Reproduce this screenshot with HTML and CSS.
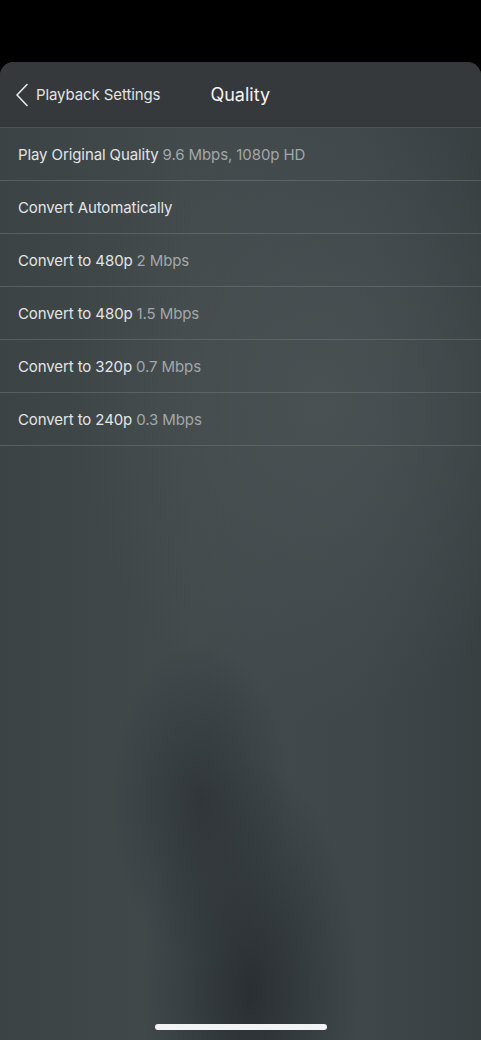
FILE: index.html
```html
<!DOCTYPE html>
<html lang="en">
  <head>
    <meta charset="UTF-8" />
    <meta name="viewport" content="width=device-width, initial-scale=1.0" />
    <title>Quality</title>
    <link rel="stylesheet" href="styles.css">
  </head>
  <body>
    <main class="sheet">
      <header class="sheet-header">
        <button class="back-button" aria-label="Back to Playback Settings">
          <svg class="back-icon" width="14" height="24" viewBox="0 0 14 24" aria-hidden="true">
            <path d="M12 1.5 L2 12 L12 22.5" fill="none" stroke="#e6e8e9" stroke-width="1.6" stroke-linecap="round" stroke-linejoin="round" />
          </svg>
          <span>Playback Settings</span>
        </button>
        <h1 class="sheet-title">Quality</h1>
      </header>

      <ul class="quality-list">
        <li class="quality-item">Play Original Quality <span class="detail">9.6 Mbps, 1080p HD</span></li>
        <li class="quality-item">Convert Automatically</li>
        <li class="quality-item">Convert to 480p <span class="detail">2 Mbps</span></li>
        <li class="quality-item">Convert to 480p <span class="detail">1.5 Mbps</span></li>
        <li class="quality-item">Convert to 320p <span class="detail">0.7 Mbps</span></li>
        <li class="quality-item">Convert to 240p <span class="detail">0.3 Mbps</span></li>
      </ul>

      <div class="home-indicator"></div>
    </main>
  </body>
</html>
```

FILE: styles.css
```css
* {
  padding: 0;
  margin: 0;
  box-sizing: border-box;
}

html,
body {
  height: 100%;
  background-color: #000;
}

body {
  padding-top: 62px;
  font-family: Inter, "Noto Sans", sans-serif;
  color: #e2e4e5;
}

.sheet {
  position: relative;
  height: 978px;
  border-radius: 14px 14px 0 0;
  overflow: hidden;
  display: flex;
  flex-direction: column;
  background:
    radial-gradient(ellipse 90px 160px at 200px 740px, rgba(42, 48, 52, 0.75), rgba(42, 48, 52, 0) 100%),
    radial-gradient(ellipse 110px 230px at 250px 930px, rgba(38, 44, 48, 0.9), rgba(38, 44, 48, 0) 100%),
    radial-gradient(ellipse 240px 320px at 320px 340px, #4a5153, rgba(74, 81, 83, 0) 100%),
    linear-gradient(90deg, #3c4345 0%, #434a4c 40%, #40474a 75%, #394042 100%);
}

.sheet-header {
  display: flex;
  align-items: center;
  height: 66px;
  padding-left: 15px;
  background-color: #35393c;
  border-bottom: 1px solid #4a5053;
}

.back-button {
  display: flex;
  align-items: center;
  gap: 7px;
  background: none;
  border: none;
  color: #e2e4e5;
  font-family: inherit;
  font-size: 15px;
  letter-spacing: -0.1px;
  cursor: pointer;
}

.back-icon {
  flex-shrink: 0;
}

.sheet-title {
  margin-left: 50px;
  font-size: 18px;
  font-weight: 400;
  color: #f2f3f4;
}

.quality-list {
  list-style: none;
}

.quality-item {
  height: 53px;
  display: flex;
  align-items: center;
  gap: 4px;
  padding-left: 18px;
  font-size: 15px;
  letter-spacing: -0.1px;
  border-bottom: 1px solid rgba(110, 118, 121, 0.55);
}

.detail {
  color: #a2a7a9;
}

.home-indicator {
  position: absolute;
  left: 155px;
  bottom: 10px;
  width: 172px;
  height: 6px;
  border-radius: 3px;
  background-color: #f2f3f4;
}
```
